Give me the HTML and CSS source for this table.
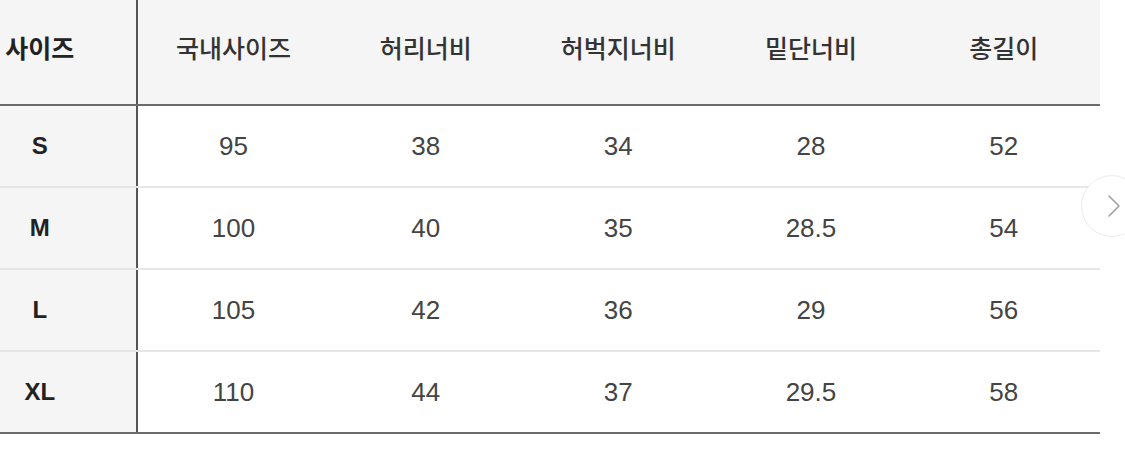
FILE: index.html
```html
<!DOCTYPE html>
<html lang="ko">
<head>
<meta charset="utf-8">
<link rel="stylesheet" href="styles.css">
</head>
<body>
<div class="wrap">
  <table class="size-table">
    <thead>
      <tr>
        <th class="label">사이즈</th>
        <th>국내사이즈</th>
        <th>허리너비</th>
        <th>허벅지너비</th>
        <th>밑단너비</th>
        <th>총길이</th>
      </tr>
    </thead>
    <tbody>
      <tr><th class="label">S</th><td>95</td><td>38</td><td>34</td><td>28</td><td>52</td></tr>
      <tr><th class="label">M</th><td>100</td><td>40</td><td>35</td><td>28.5</td><td>54</td></tr>
      <tr><th class="label">L</th><td>105</td><td>42</td><td>36</td><td>29</td><td>56</td></tr>
      <tr><th class="label">XL</th><td>110</td><td>44</td><td>37</td><td>29.5</td><td>58</td></tr>
    </tbody>
  </table>
  <button class="next" aria-label="다음">
    <svg width="14" height="24" viewBox="0 0 14 24"><path d="M2 2 L12 12 L2 22" fill="none" stroke="#a0a0a0" stroke-width="1.6" stroke-linecap="round" stroke-linejoin="round"/></svg>
  </button>
</div>
</body>
</html>
```

FILE: styles.css
```css
html, body {
  margin: 0;
  padding: 0;
  background: #ffffff;
  overflow: hidden;
}
body {
  width: 1125px;
  height: 467px;
  font-family: "Liberation Sans", "Noto Sans CJK KR", sans-serif;
  color: #3a3a3a;
}
.wrap {
  position: relative;
  width: 1125px;
  height: 467px;
  overflow: hidden;
}
.size-table {
  border-collapse: collapse;
  table-layout: fixed;
  width: 1156px;
  margin-left: -56px;
  margin-top: -10px;
}
.size-table th,
.size-table td {
  text-align: center;
  padding: 0;
  font-weight: normal;
}
.size-table thead th {
  height: 114px;
  background: #f5f5f5;
  font-family: "Noto Sans CJK KR", sans-serif;
  font-size: 25px;
  font-weight: 500;
  color: #333;
  border-bottom: 2px solid #6a6a6a;
  vertical-align: middle;
}
.size-table tbody td,
.size-table tbody th {
  height: 80px;
  font-size: 26px;
  color: #444;
  border-bottom: 2px solid #e6e6e6;
}
.size-table tbody tr:last-child td,
.size-table tbody tr:last-child th {
  border-bottom: 2px solid #6a6a6a;
}
.size-table .label {
  background: #f5f5f5;
  border-right: 2px solid #555;
  font-weight: bold;
  color: #222;
}
.size-table thead .label {
  font-weight: bold;
  color: #222;
}
.size-table tbody .label {
  font-size: 24px;
}
.next {
  position: absolute;
  left: 1081px;
  top: 175px;
  width: 62px;
  height: 62px;
  border-radius: 50%;
  border: 1px solid #ececec;
  background: #ffffff;
  display: flex;
  align-items: center;
  justify-content: flex-start;
  padding: 0 0 0 25px;
  box-sizing: border-box;
}
```
